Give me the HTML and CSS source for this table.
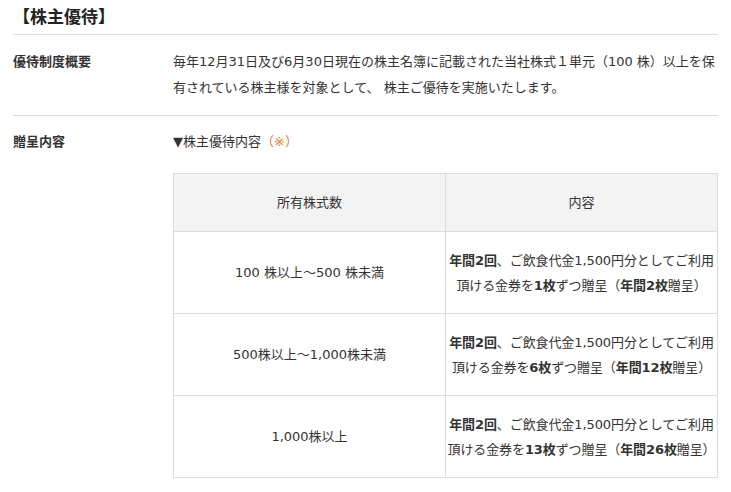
FILE: index.html
```html
<!DOCTYPE html>
<html lang="ja">

<head>
    <meta charset="UTF-8">
    <meta name="viewport" content="width=device-width, initial-scale=1.0">
    <link rel="stylesheet" href="styles.css">
    <title>株主優待</title>
</head>

<body>
    <div class="wrap">
        <h2 class="ttl">【株主優待】</h2>
        <dl class="info">
            <dt>優待制度概要</dt>
            <dd>毎年12月31日及び6月30日現在の株主名簿に記載された当社株式１単元（100 株）以上を保有されている株主様を対象として、 株主ご優待を実施いたします。</dd>
        </dl>
        <dl class="info last">
            <dt>贈呈内容</dt>
            <dd>
                <p class="sub">▼株主優待内容<span class="note">（※）</span></p>
                <table class="tbl">
                    <tr>
                        <th>所有株式数</th>
                        <th>内容</th>
                    </tr>
                    <tr>
                        <td>100 株以上～500 株未満</td>
                        <td class="nw"><b>年間2回</b>、ご飲食代金1,500円分としてご利用<br>頂ける金券を<b>1枚</b>ずつ贈呈（<b>年間2枚</b>贈呈）</td>
                    </tr>
                    <tr>
                        <td>500株以上～1,000株未満</td>
                        <td class="nw"><b>年間2回</b>、ご飲食代金1,500円分としてご利用<br>頂ける金券を<b>6枚</b>ずつ贈呈（<b>年間12枚</b>贈呈）</td>
                    </tr>
                    <tr>
                        <td>1,000株以上</td>
                        <td class="nw"><b>年間2回</b>、ご飲食代金1,500円分としてご利用<br>頂ける金券を<b>13枚</b>ずつ贈呈（<b>年間26枚</b>贈呈）</td>
                    </tr>
                </table>
            </dd>
        </dl>
    </div>
</body>

</html>
```

FILE: styles.css
```css
* {
    margin: 0;
    padding: 0;
    box-sizing: border-box;
}

body {
    font-family: "DejaVu Sans", "Noto Sans CJK JP", sans-serif;
    font-size: 13px;
    color: #333;
    background-color: #fff;
}

.wrap {
    padding: 0 13px;
}

.ttl {
    font-size: 17px;
    line-height: 26px;
    padding-top: 4px;
    padding-bottom: 4px;
    color: #222;
    border-bottom: 1px solid #ddd;
}

.info {
    display: flex;
    padding: 14px 0 14px;
    border-bottom: 1px solid #ddd;
    line-height: 26px;
}

.info.last {
    border-bottom: none;
    padding-top: 13px;
}

.info dt {
    width: 160px;
    flex-shrink: 0;
    font-weight: bold;
}

.info dd {
    flex: 1;
}

.note {
    color: #d9822b;
}

.tbl {
    margin-top: 18px;
    width: 100%;
    border-collapse: collapse;
    table-layout: fixed;
}

.tbl th,
.tbl td {
    border: 1px solid #ddd;
    text-align: center;
    vertical-align: middle;
    font-weight: normal;
    line-height: 25px;
    padding: 0;
}

.tbl th {
    background-color: #f3f3f3;
    height: 58px;
}

.tbl td {
    height: 82px;
}

.tbl td.nw {
    white-space: nowrap;
    letter-spacing: -0.1px;
}

.tbl th:first-child {
    width: 272px;
}

.tbl b {
    font-weight: bold;
}
```
